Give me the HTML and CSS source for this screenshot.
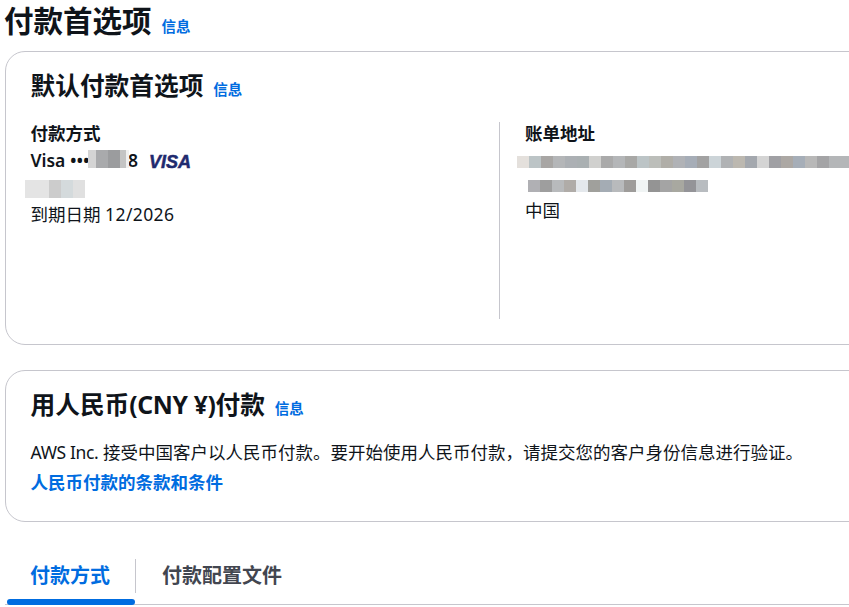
FILE: index.html
```html
<!DOCTYPE html>
<html lang="zh-CN">
<head>
<meta charset="utf-8">
<title>付款首选项</title>
<link rel="stylesheet" href="styles.css">
</head>
<body>
<main class="page">
  <header class="page-head">
    <h1 class="page-title">付款首选项</h1>
    <a class="info" href="#">信息</a>
  </header>

  <section class="card card-pref">
    <div class="card-head">
      <h2 class="card-title">默认付款首选项</h2>
      <a class="info" href="#">信息</a>
    </div>
    <div class="columns">
      <div class="col col-left">
        <div class="label">付款方式</div>
        <div class="line visa-line">
          <span class="visa-num"><span>Visa •••••</span><span>8</span></span>
          <svg class="visa-logo" width="42" height="16" viewBox="0 0 42 16" aria-label="VISA">
            <text x="0" y="14" class="visa-mark">VISA</text>
          </svg>
          <span class="mosaic mosaic-card"></span>
        </div>
        <div class="line name-line"><span class="mosaic mosaic-name"></span></div>
        <div class="line">到期日期 <span class="digits">12/2026</span></div>
      </div>
      <div class="col col-right">
        <div class="label">账单地址</div>
        <div class="addr">
          <span class="mosaic mosaic-addr1"></span>
          <span class="mosaic mosaic-addr2"></span>
        </div>
        <div class="line">中国</div>
      </div>
    </div>
  </section>

  <section class="card card-cny">
    <div class="card-head">
      <h2 class="card-title">用人民币<span class="tight">(CNY ¥)</span>付款</h2>
      <a class="info" href="#">信息</a>
    </div>
    <p class="line body-text"><span class="tight">AWS Inc.</span> 接受中国客户以人民币付款。要开始使用人民币付款，请提交您的客户身份信息进行验证。</p>
    <a class="terms" href="#">人民币付款的条款和条件</a>
  </section>

  <nav class="tabs">
    <a class="tab tab-active" href="#">付款方式</a>
    <a class="tab tab-plain" href="#">付款配置文件</a>
  </nav>
</main>
</body>
</html>
```
FILE: styles.css
```css
* { box-sizing: border-box; }
html, body { margin: 0; padding: 0; background: #fff; overflow: hidden; height: 607px; }
body {
  font-family: "Noto Sans", "Noto Sans CJK SC", sans-serif;
  font-size: 17.5px;
  color: #0f141a;
}
a { text-decoration: none; color: #006ce0; }
.page { width: 849px; overflow: hidden; padding-left: 5px; }
.page-head { display: flex; align-items: baseline; height: 51px; padding-top: 1px; }
.page-title { margin: 0 0 0 -1px; font-size: 29.5px; line-height: 40px; font-weight: 700; white-space: nowrap; }
.info { font-size: 14.5px; font-weight: 700; margin-left: 10px; white-space: nowrap; }
.card {
  width: 880px;
  border: 1px solid #c6c6cd;
  border-radius: 20px;
  padding: 0 24.5px;
}
.card-pref { height: 294px; }
.card-cny { height: 152px; margin-top: 25px; }
.card-head { display: flex; align-items: baseline; height: 51px; padding-top: 15px; }
.card-title { margin: 0; font-size: 24.7px; line-height: 38px; font-weight: 700; white-space: nowrap; }
.tight { letter-spacing: -0.35px; }
.digits { letter-spacing: 0.4px; }
.columns { display: flex; margin-top: 19px; }
.col-left { width: 469.5px; height: 197px; border-right: 1px solid #c6c6cd; }
.col-right { padding-left: 25px; flex: 1; }
.label { font-weight: 700; line-height: 22px; }
.line { line-height: 27px; margin: 0; }
.visa-line { position: relative; display: flex; align-items: center; height: 27px; margin-top: 3px; white-space: nowrap; }
.visa-num { font-weight: 600; display: flex; justify-content: space-between; width: 107.5px; }
.visa-logo { margin-left: 11px; margin-top: 2px; flex: none; overflow: visible; }
.visa-mark { font-family: "Liberation Sans", sans-serif; font-size: 18px; font-weight: 700; font-style: italic; fill: #1f2a6e; stroke: #1f2a6e; stroke-width: 0.5px; }
.name-line { position: relative; height: 27px; }
.addr { position: relative; height: 50px; margin-top: 3px; }
.mosaic { position: absolute; display: block; }
.mosaic-card {
  left: 57px; top: 3px; width: 41px; height: 18px;
  background: linear-gradient(90deg, #d4d4d4 0 8px, #a9aaac 8px 20px, #9b9c9e 20px 32px, #c4c4c4 32px 38px, #f0f0f0 38px);
}
.mosaic-name {
  left: -6px; top: 6px; width: 60px; height: 18px;
  background: linear-gradient(90deg, #e4e4e4 0 24px, #cccccc 24px 36px, #d4dadc 36px 48px, #e0e0e0 48px);
}
.mosaic-addr1 {
  left: -8px; top: 9px; width: 336px; height: 12px;
  background: linear-gradient(90deg,
    #e4e0dc 0 12px, #bcc4c6 12px 24px, #a8a6a4 24px 36px, #b4b6b8 36px 48px,
    #acb0b4 48px 60px, #aab0b2 60px 72px, #d0d0ce 72px 84px, #aaaaaa 84px 96px,
    #b4b6b8 96px 108px, #a8a8a6 108px 120px, #bcc4c6 120px 132px, #bcbeba 132px 144px,
    #b0aea8 144px 156px, #b0b2b6 156px 168px, #a6adb7 168px 180px, #a2a2a2 180px 192px,
    #ccd4d8 192px 204px, #b0b2b4 204px 216px, #bcb8b0 216px 228px, #a4a8ae 228px 240px,
    #d4d4d4 240px 252px, #a0a0a4 252px 264px, #aca8a4 264px 276px, #a6aeb8 276px 288px,
    #b8b8b8 288px 300px, #a4a4a6 300px 312px, #b4b6b8 312px 336px);
}
.mosaic-addr2 {
  left: 3px; top: 33px; width: 180px; height: 12px;
  background: linear-gradient(90deg,
    #b0b0b4 0 12px, #9e9e9e 12px 24px, #b8babc 24px 36px, #b0aca8 36px 48px,
    #e4e8ec 48px 60px, #a0a09c 60px 72px, #a4acb4 72px 84px, #b8babc 84px 96px,
    #9e9c9a 96px 108px, #f0f4f4 108px 120px, #949494 120px 132px, #a4a4a4 132px 144px,
    #a8a8a0 144px 156px, #949498 156px 168px, #b8bcc0 168px 180px);
}
.body-text { margin-top: 17px; white-space: nowrap; }
.terms { display: block; font-weight: 700; line-height: 33px; white-space: nowrap; }
.tabs { display: flex; margin-top: 18px; width: 844px; height: 65px; border-bottom: 1px solid #c6c6cd; align-items: flex-start; padding-top: 19px; }
.tab { font-size: 20px; font-weight: 700; color: #424650; line-height: 34px; padding: 0 25px; position: relative; white-space: nowrap; }
.tab-plain { padding-left: 26px; }
.tab-active { color: #006ce0; width: 131px; border-right: 1px solid #c6c6cd; height: 34px; }
.tab-active::after { content: ""; position: absolute; left: 2px; right: 0; top: 40px; height: 6px; background: #006ce0; border-radius: 3px; }
```
